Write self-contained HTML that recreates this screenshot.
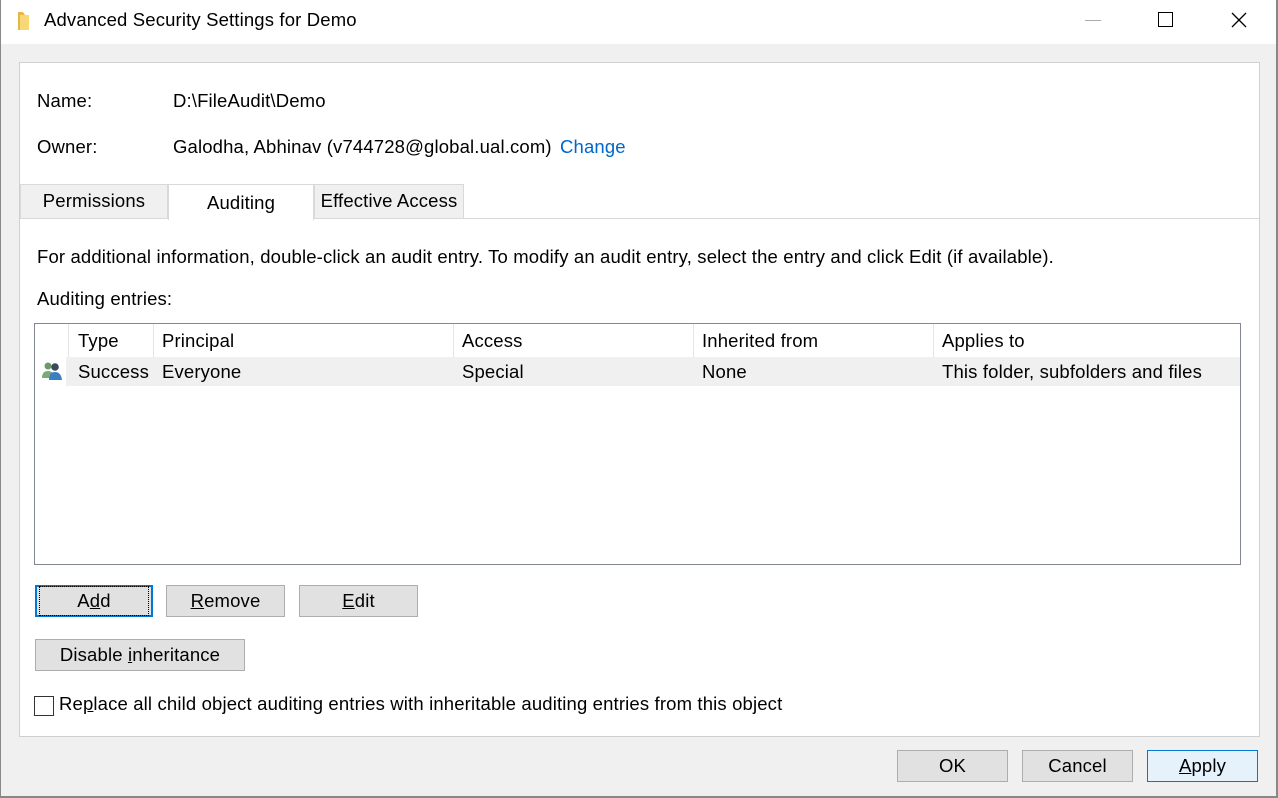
<!DOCTYPE html>
<html><head><meta charset="utf-8"><style>
*{margin:0;padding:0;box-sizing:border-box}
body{width:1278px;height:798px;background:#f0f0f0;font-family:"Liberation Sans",sans-serif;font-size:18.5px;letter-spacing:0.15px;color:#000;position:relative;overflow:hidden}
.a{position:absolute;white-space:nowrap}
.btn{position:absolute;background:#e1e1e1;border:1px solid #adadad;text-align:center;line-height:30px;height:32px}
u{text-decoration:underline}
</style></head><body>
<div class="a" style="left:0;top:0;width:1278px;height:44px;background:#fff"></div>
<div class="a" style="left:0;top:0;width:1px;height:798px;background:#888"></div>
<div class="a" style="left:1276px;top:0;width:2px;height:798px;background:#888"></div>
<div class="a" style="left:0;top:796px;width:1278px;height:2px;background:#888"></div>
<svg class="a" style="left:16px;top:10px" width="18" height="22"><path d="M2 2h5l2 3h3v15H2z" fill="#e8b646"/><path d="M4 5h9v15H4z" fill="#f8d775"/></svg>
<div class="a" style="left:44px;top:9px;font-size:18.5px">Advanced Security Settings for Demo</div>
<div class="a" style="left:1085px;top:20px;width:16px;height:1px;background:#aaa"></div>
<div class="a" style="left:1158px;top:12px;width:15px;height:15px;border:1.5px solid #000"></div>
<svg class="a" style="left:1231px;top:12px" width="16" height="16"><path d="M1 1L15 15M15 1L1 15" stroke="#000" stroke-width="1.3"/></svg>

<div class="a" style="left:19px;top:62px;width:1241px;height:675px;background:#fff;border:1px solid #d0d0d0"></div>
<div class="a" style="left:37px;top:90px">Name:</div>
<div class="a" style="left:173px;top:90px">D:\FileAudit\Demo</div>
<div class="a" style="left:37px;top:136px">Owner:</div>
<div class="a" style="left:173px;top:136px">Galodha, Abhinav (v744728@global.ual.com)</div>
<div class="a" style="left:560px;top:136px;color:#0066cc">Change</div>

<div class="a" style="left:20px;top:184px;width:148px;height:34px;background:#f0f0f0;border:1px solid #d9d9d9;border-bottom:none;text-align:center;line-height:32px">Permissions</div>
<div class="a" style="left:314px;top:184px;width:150px;height:34px;background:#f0f0f0;border:1px solid #d9d9d9;border-bottom:none;text-align:center;line-height:32px">Effective Access</div>
<div class="a" style="left:20px;top:218px;width:1239px;height:1px;background:#d9d9d9"></div>
<div class="a" style="left:168px;top:184px;width:146px;height:36px;background:#fff;border:1px solid #d9d9d9;border-bottom:none;text-align:center;line-height:36px">Auditing</div>

<div class="a" style="left:37px;top:246px">For additional information, double-click an audit entry. To modify an audit entry, select the entry and click Edit (if available).</div>
<div class="a" style="left:37px;top:288px">Auditing entries:</div>

<div class="a" style="left:34px;top:323px;width:1207px;height:242px;border:1px solid #828790;background:#fff"></div>
<div class="a" style="left:68px;top:324px;width:1px;height:33px;background:#e5e5e5"></div>
<div class="a" style="left:153px;top:324px;width:1px;height:33px;background:#e5e5e5"></div>
<div class="a" style="left:453px;top:324px;width:1px;height:33px;background:#e5e5e5"></div>
<div class="a" style="left:693px;top:324px;width:1px;height:33px;background:#e5e5e5"></div>
<div class="a" style="left:933px;top:324px;width:1px;height:33px;background:#e5e5e5"></div>
<div class="a" style="left:78px;top:330px">Type</div>
<div class="a" style="left:162px;top:330px">Principal</div>
<div class="a" style="left:462px;top:330px">Access</div>
<div class="a" style="left:702px;top:330px">Inherited from</div>
<div class="a" style="left:942px;top:330px">Applies to</div>
<div class="a" style="left:66px;top:357px;width:1174px;height:29px;background:#f0f0f0"></div>
<svg class="a" style="left:41px;top:361px" width="24" height="20"><circle cx="7" cy="5" r="3.5" fill="#6a9a6a"/><path d="M1 17q0-7 6-7t6 7z" fill="#7aaa7a"/><circle cx="14" cy="6" r="3.8" fill="#3a4a5a"/><path d="M8 19q0-8 6-8t7 8z" fill="#3b7fc0"/></svg>
<div class="a" style="left:78px;top:361px">Success</div>
<div class="a" style="left:162px;top:361px">Everyone</div>
<div class="a" style="left:462px;top:361px">Special</div>
<div class="a" style="left:702px;top:361px">None</div>
<div class="a" style="left:942px;top:361px">This folder, subfolders and files</div>

<div class="btn" style="left:35px;top:585px;width:118px;border:2px solid #0078d7;line-height:28px"><span style="outline:1px dotted #000;display:inline-block;width:108px">A<u>d</u>d</span></div>
<div class="btn" style="left:166px;top:585px;width:119px"><u>R</u>emove</div>
<div class="btn" style="left:299px;top:585px;width:119px"><u>E</u>dit</div>
<div class="btn" style="left:35px;top:639px;width:210px">Disable <u>i</u>nheritance</div>
<div class="a" style="left:34px;top:696px;width:20px;height:20px;border:1px solid #333;background:#fff"></div>
<div class="a" style="left:59px;top:693px">Re<u>p</u>lace all child object auditing entries with inheritable auditing entries from this object</div>

<div class="btn" style="left:897px;top:750px;width:111px">OK</div>
<div class="btn" style="left:1022px;top:750px;width:111px">Cancel</div>
<div class="btn" style="left:1147px;top:750px;width:111px;background:#e5f1fb;border-color:#0078d7"><u>A</u>pply</div>
</body></html>
